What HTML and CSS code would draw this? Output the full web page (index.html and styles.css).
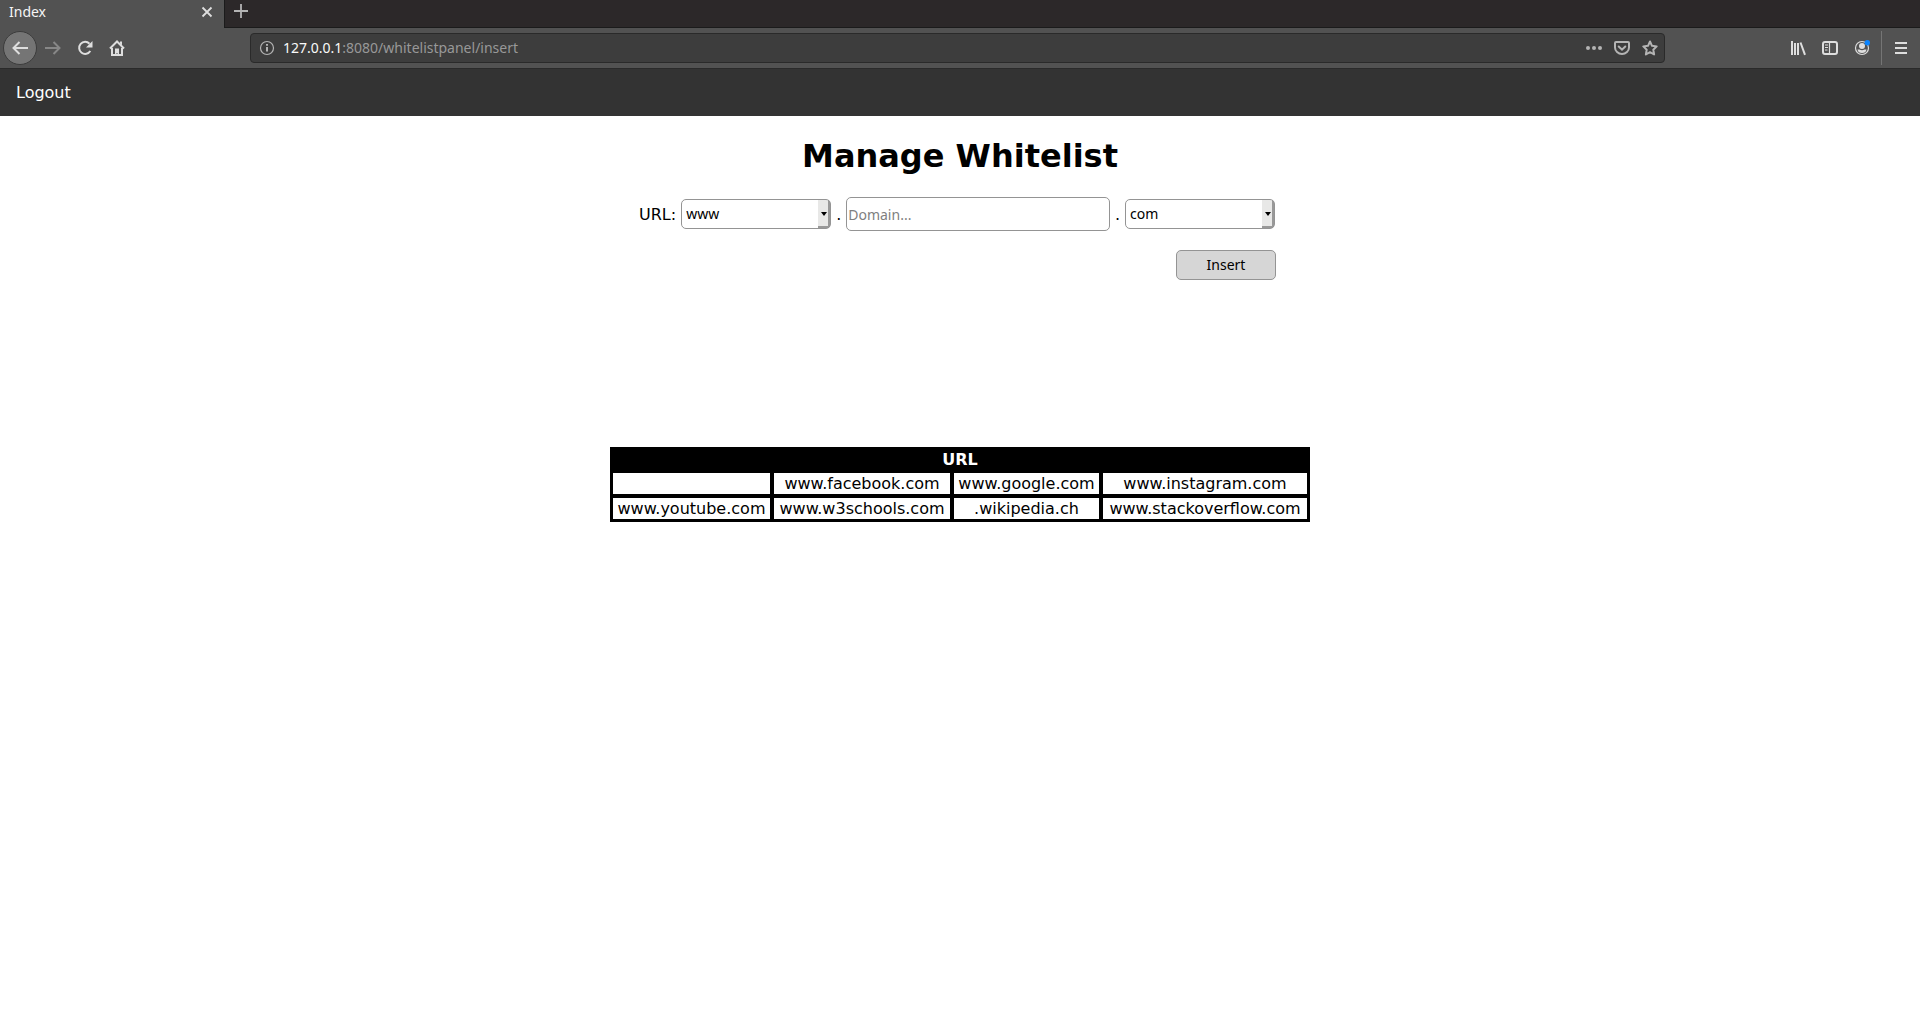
FILE: index.html
```html
<!DOCTYPE html>
<html lang="en">
<head>
<meta charset="utf-8">
<title>Index</title>
<link rel="stylesheet" href="styles.css">
</head>
<body>
<header class="browser">
  <div class="tabs">
    <div class="tab">
      <span>Index</span>
      <button class="icon-button" type="button" aria-label="Close tab"><svg class="icon bright" viewBox="0 0 16 16"><path d="M3.500 3.500l9 9M12.500 3.500l-9 9" stroke-width="1.800"/></svg></button>
    </div>
    <button class="icon-button new-tab" type="button" aria-label="New tab"><svg class="icon plus" viewBox="0 0 16 16"><path d="M8 1v14M1 8h14" stroke-width="1.800"/></svg></button>
  </div>
  <div class="toolbar">
    <div class="nav-buttons">
      <button class="icon-button back" type="button" aria-label="Back"><svg class="icon bright" viewBox="0 0 16 16"><path d="M16 8H2M7.500 2L1.500 8l6 6"/></svg></button>
      <button class="icon-button" type="button" aria-label="Forward"><svg class="icon dim" viewBox="0 0 16 16"><path d="M0 8h14M8.500 2l6 6-6 6"/></svg></button>
      <button class="icon-button" type="button" aria-label="Reload"><svg class="icon bright" viewBox="0 0 16 16"><path d="M12.500 3.700A6 6 0 1 0 13.300 11"/><path class="solid" d="M15.500 1v6.500H9z"/></svg></button>
      <button class="icon-button" type="button" aria-label="Home"><svg class="icon bright" viewBox="0 0 16 16"><path d="M1 8.500L8 1.500l7 7M3 8v7h10V8"/><path class="solid" d="M6 15V8.500h4V15H8.500v-2h-1v2zM11 1.500h2v4l-2-2z"/></svg></button>
    </div>
    <div class="address">
      <svg class="icon info" viewBox="0 0 16 16"><circle cx="8" cy="8" r="6.500" stroke-width="1.200"/><path d="M8 7v4.500M8 4v1.700"/></svg>
      <div class="url" role="textbox" aria-label="Address"><span class="host">127.0.0.1</span>:8080/whitelistpanel/insert</div>
      <button class="icon-button" type="button" aria-label="Page actions"><svg class="icon" viewBox="0 0 16 16"><g class="solid"><circle cx="2" cy="8" r="2"/><circle cx="8" cy="8" r="2"/><circle cx="14" cy="8" r="2"/></g></svg></button>
      <button class="icon-button" type="button" aria-label="Save to Pocket"><svg class="icon" viewBox="0 0 16 16"><path d="M2 2h12q1 0 1 1v4.500a7 6.500 0 0 1-14 0V3q0-1 1-1zM4.700 6.500L8 9.700l3.300-3.200" stroke-linecap="round"/></svg></button>
      <button class="icon-button" type="button" aria-label="Bookmark"><svg class="icon" viewBox="0 0 16 16"><path d="M8 1.500l2 4.300 4.700.6-3.400 3.300.8 4.800L8 12.200l-4.100 2.300.8-4.800-3.400-3.300L6 5.800z" stroke-linejoin="round"/></svg></button>
    </div>
    <div class="tools">
      <button class="icon-button" type="button" aria-label="Library"><svg class="icon bright" viewBox="0 0 16 16"><path d="M2 1v14M5 3v12M8 3v12M10.500 2.500l4.500 12.300"/></svg></button>
      <button class="icon-button" type="button" aria-label="Sidebars"><svg class="icon bright" viewBox="0 0 16 16"><rect x="1" y="2" width="14" height="12" rx="2"/><path d="M7.500 2v12M3 5h3M3 7.500h3M3 10h2.500" stroke-width="1.200"/></svg></button>
      <button class="icon-button" type="button" aria-label="Account"><svg class="icon bright" viewBox="0 0 16 16"><circle cx="8" cy="8" r="6.500" stroke-width="1.200"/><circle class="solid" cx="8" cy="6" r="3"/><path class="solid" d="M3.500 9.500h2q2.500 1.500 5 0h2Q12 13 8 13t-4.500-3.500z"/><circle class="notice" cx="13.300" cy="2.700" r="2.700"/></svg></button>
    </div>
    <button class="icon-button menu" type="button" aria-label="Menu"><svg class="icon bright" viewBox="0 0 16 16"><path d="M2 3h12M2 8h12M2 13h12"/></svg></button>
  </div>
</header>
<nav class="site-nav"><a href="#">Logout</a></nav>
<main>
  <h1>Manage Whitelist</h1>
  <form class="entry">
    <div class="fields">
      <label for="sub">URL:</label>
      <select id="sub"><option>www</option></select>
      <span>.</span>
      <input type="text" placeholder="Domain..." aria-label="Domain">
      <span>.</span>
      <select aria-label="Top-level domain"><option>com</option></select>
    </div>
    <button class="insert" type="submit">Insert</button>
  </form>
  <table>
    <colgroup><col class="first"><col class="second"><col class="third"><col></colgroup>
    <thead><tr><th colspan="4">URL</th></tr></thead>
    <tbody>
      <tr><td></td><td>www.facebook.com</td><td>www.google.com</td><td>www.instagram.com</td></tr>
      <tr><td>www.youtube.com</td><td>www.w3schools.com</td><td>.wikipedia.ch</td><td>www.stackoverflow.com</td></tr>
    </tbody>
  </table>
</main>
</body>
</html>
```
FILE: styles.css
```css
* { box-sizing: border-box; }
body {
  margin: 0;
  background: #fff;
  color: #000;
  font: 16px/19px "DejaVu Sans", sans-serif;
}

/* Browser bars */
.browser { font: 14px/20px "Noto Sans", sans-serif; color: #f5f5f5; }
.tabs { display: flex; height: 28px; background: #2c2829; }
.tab {
  display: flex;
  align-items: center;
  justify-content: space-between;
  width: 225px;
  padding: 0 9px 4px;
  background: #525252;
  border-right: 1px solid #1b1b1b;
}
.icon-button {
  display: flex;
  align-items: center;
  padding: 0;
  border: 0;
  background: none;
}
.tabs .new-tab {
  flex: 1;
  padding: 0 8px 5px;
  border-bottom: 1px solid #1b1b1b;
}
.icon {
  display: block;
  width: 16px;
  height: 16px;
  fill: none;
  stroke: #b4b4b4;
  stroke-width: 2;
}
.bright { stroke: #dedede; }
.dim { stroke: #878787; }
.solid { fill: #b4b4b4; stroke: none; }
.bright .solid { fill: #dedede; }
.bright .notice { fill: #0a84ff; stroke: none; }
.toolbar {
  display: flex;
  align-items: center;
  height: 41px;
  background: #525252;
  border-bottom: 1px solid #2a2a2a;
}
.nav-buttons { display: flex; align-items: center; gap: 16px; width: 250px; padding-left: 3px; }
.nav-buttons .back {
  justify-content: center;
  width: 34px;
  height: 34px;
  margin-right: -8px;
  border: 1px solid #3c3c3c;
  border-radius: 50%;
  background: #757575;
}
.address {
  display: flex;
  align-items: center;
  flex: 1;
  gap: 12px;
  height: 30px;
  padding: 0 6px 0 8px;
  border: 1px solid #2a2a2a;
  border-radius: 4px;
  background: #3d3d3d;
}
.url { flex: 1; margin-left: -4px; color: #989898; }
.host { color: #f9f9f9; }
.tools { display: flex; gap: 16px; margin: 0 11px 0 125px; }
.menu.icon-button { height: 34px; padding: 0 11px; border-left: 1px solid #757575; }

/* Page */
.site-nav { padding: 14px 16px; background: #333; }
.site-nav a { color: #fff; text-decoration: none; }
h1 { margin: 21px 0 22px; font-size: 32px; line-height: 38px; text-align: center; }
.entry { width: 642px; margin: 0 auto; padding-right: 5px; }
.fields { display: flex; align-items: center; gap: 5px; padding-right: 1px; }
select, input, .insert {
  height: 30px;
  border: 1px solid #949494;
  border-radius: 5px;
  font: 14px/20px "Noto Sans", sans-serif;
  color: #000;
}
select {
  width: 150px;
  padding: 0 16px 0 4px;
  appearance: none;
  background:
    url("data:image/svg+xml,%3Csvg xmlns='http://www.w3.org/2000/svg' width='6' height='4'%3E%3Cpath d='M0 0h6L3 4z'/%3E%3C/svg%3E") right 3px center no-repeat,
    linear-gradient(#999, #999) right / 2px 100% no-repeat,
    linear-gradient(#999, #999) right bottom / 12px 2px no-repeat,
    linear-gradient(#e8e8e7, #e8e8e7) right / 12px 100% no-repeat,
    #fff;
}
input { flex: 1; min-width: 0; height: 34px; padding: 0 1px; background: #fff; }
input::placeholder { color: #808080; opacity: 1; }
.insert { display: block; width: 100px; margin: 19px 0 0 auto; background: #d6d6d6; }
table {
  width: 700px;
  margin: 167px auto 0;
  border: 1px solid #000;
  border-spacing: 0;
  table-layout: fixed;
  text-align: center;
}
.first { width: 161px; }
.second { width: 180px; }
.third { width: 149px; }
td { height: 25px; padding: 1px; border: 2px solid #000; }
th { padding: 1px; border: 1px solid #000; background: #000; color: #fff; }
```
